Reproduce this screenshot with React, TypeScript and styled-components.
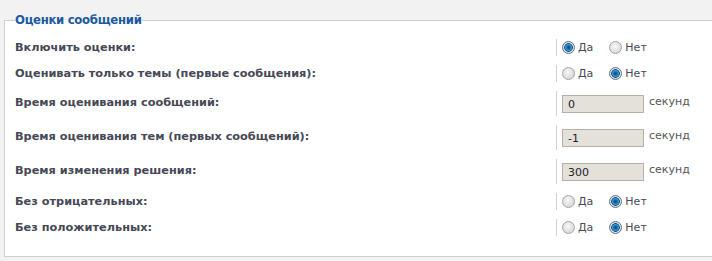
import styled, { createGlobalStyle } from "styled-components";

const Global = createGlobalStyle`
  html, body {
    margin: 0;
    padding: 0;
    background: #f2f2f2;
    overflow: hidden;
  }
  body {
    font-family: "DejaVu Sans", Verdana, sans-serif;
  }
`

const Page = styled.div`
  width: 740px;
  padding: 11px 0 0 4px;
`

const Fieldset = styled.fieldset`
  margin: 0;
  padding: 0 0 20px 10px;
  border: 1px solid #cfcfcf;
  background: #fff;
  min-width: 0;
`

const Legend = styled.legend`
  padding: 0;
  margin: 0;
  font-family: "DejaVu Sans Condensed", "DejaVu Sans", sans-serif;
  font-size: 13px;
  letter-spacing: -0.3px;
  line-height: 18px;
  font-weight: bold;
  color: #1c5a9e;
`

const Rows = styled.div`
  display: flex;
  flex-direction: column;
  gap: 9px;
  padding-top: 10px;
`

const Row = styled.div<{ $tall?: boolean }>`
  display: flex;
  height: ${p => (p.$tall ? 25 : 17)}px;
`

const Label = styled.div<{ $tall?: boolean }>`
  width: 541px;
  font-size: 11.3px;
  font-weight: bold;
  color: #464856;
  display: flex;
  align-items: center;
  padding-bottom: ${p => (p.$tall ? 3 : 0)}px;
`

const Cell = styled.div`
  border-left: 1px solid #d0d0d0;
  padding-left: 5px;
  display: flex;
  align-items: center;
  font-size: 11px;
  color: #4a4a55;
`

const Radio = styled.span<{ $on?: boolean }>`
  width: 11px;
  height: 11px;
  border-radius: 50%;
  border: 1px solid ${p => (p.$on ? "#5d6f80" : "#a4a4a4")};
  background: ${p =>
    p.$on
      ? "radial-gradient(circle at 50% 50%, #0a3f6e 0, #1878b8 2px, #3a9ad6 3px, #0e4d80 4px, #e8e8e8 4.6px, #d2d2d2 100%)"
      : "radial-gradient(circle at 45% 40%, #ffffff 0, #eeeeee 2px, #cfcfcf 100%)"};
  margin-right: 3px;
`

const Option = styled.span`
  display: flex;
  align-items: center;
  margin-right: 16px;
`

const Input = styled.input`
  box-sizing: border-box;
  width: 82px;
  height: 18px;
  margin: 4px 0 0 0;
  padding: 0 5px;
  border: 1px solid #b5b0a8;
  background: #e4e0da;
  font-family: "DejaVu Sans", Verdana, sans-serif;
  font-size: 11px;
  color: #222;
  align-self: flex-start;
  outline: none;
`

const Unit = styled.span`
  align-self: flex-start;
  margin: 4px 0 0 5px;
  color: #555;
  font-size: 11px;
`

type Setting =
  | { label: string; kind: "radio"; value: boolean }
  | { label: string; kind: "text"; value: string }

const settings: Setting[] = [
  { label: "Включить оценки:", kind: "radio", value: true },
  { label: "Оценивать только темы (первые сообщения):", kind: "radio", value: false },
  { label: "Время оценивания сообщений:", kind: "text", value: "0" },
  { label: "Время оценивания тем (первых сообщений):", kind: "text", value: "-1" },
  { label: "Время изменения решения:", kind: "text", value: "300" },
  { label: "Без отрицательных:", kind: "radio", value: false },
  { label: "Без положительных:", kind: "radio", value: false },
]

const App = () => {
  return (
    <Page>
      <Global />
      <Fieldset>
        <Legend>Оценки сообщений</Legend>
        <Rows>
          {settings.map(s => (
            <Row key={s.label} $tall={s.kind === "text"}>
              <Label $tall={s.kind === "text"}>{s.label}</Label>
              <Cell>
                {s.kind === "radio" ? (
                  <>
                    <Option><Radio $on={s.value} />Да</Option>
                    <Option><Radio $on={!s.value} />Нет</Option>
                  </>
                ) : (
                  <>
                    <Input defaultValue={s.value} />
                    <Unit>секунд</Unit>
                  </>
                )}
              </Cell>
            </Row>
          ))}
        </Rows>
      </Fieldset>
    </Page>
  )
}

export default App
